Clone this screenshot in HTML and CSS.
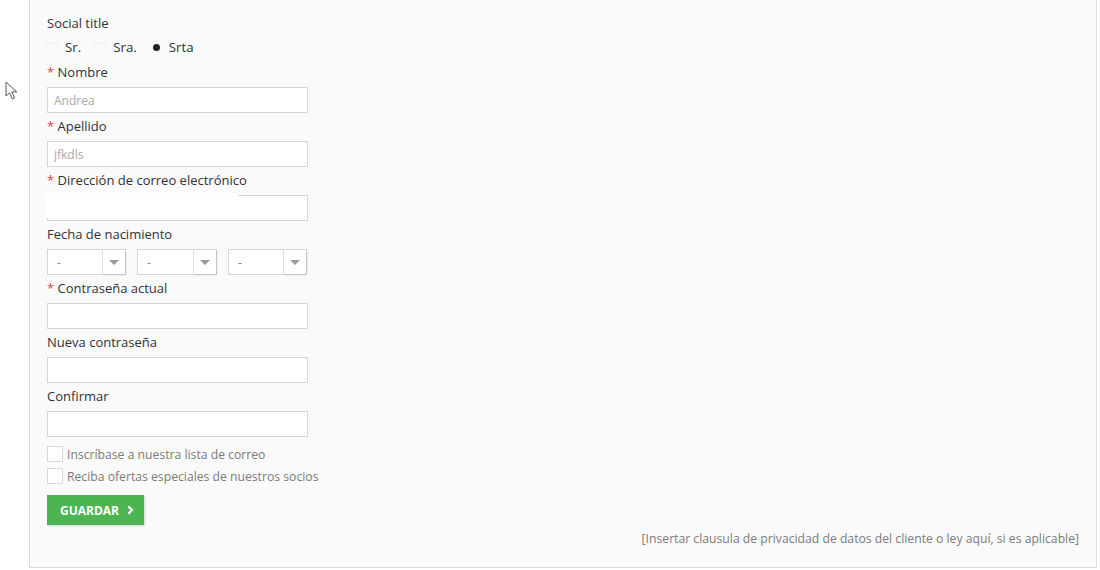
FILE: index.html
```html
<!DOCTYPE html>
<html lang="es">
<head>
    <meta charset="UTF-8">
    <title>Información personal</title>
    <link rel="stylesheet" href="styles.css">
</head>
<body>
    <!-- Mouse pointer left on the screenshot -->
    <svg class="pointer" viewBox="0 0 14 20" width="14" height="20">
        <path d="M1 1 L1 15 L4.5 11.8 L7.3 18 L9.6 17 L6.9 10.9 L11.8 10.9 Z" fill="#fff" stroke="#555" stroke-width="1" stroke-linejoin="round"/>
    </svg>

    <section class="panel">
        <form class="customer-form">
            <div class="field">
                <div class="label">Social title</div>
                <div class="radios">
                    <label class="radio"><span class="dot"></span>Sr.</label>
                    <label class="radio"><span class="dot"></span>Sra.</label>
                    <label class="radio"><span class="dot checked"></span>Srta</label>
                </div>
            </div>

            <div class="field">
                <div class="label"><span class="req">*</span> Nombre</div>
                <input class="text-input" type="text" placeholder="Andrea">
            </div>

            <div class="field">
                <div class="label"><span class="req">*</span> Apellido</div>
                <input class="text-input" type="text" placeholder="jfkdls">
            </div>

            <div class="field">
                <div class="label"><span class="req">*</span> Dirección de correo electrónico</div>
                <div class="masked">
                    <input class="text-input" type="email">
                    <span class="redact"></span>
                </div>
            </div>

            <div class="field">
                <div class="label">Fecha de nacimiento</div>
                <div class="date-row">
                    <div class="select small"><span>-</span><span class="arrow"></span></div>
                    <div class="select"><span>-</span><span class="arrow"></span></div>
                    <div class="select small"><span>-</span><span class="arrow"></span></div>
                </div>
            </div>

            <div class="field">
                <div class="label"><span class="req">*</span> Contraseña actual</div>
                <input class="text-input" type="password">
            </div>

            <div class="field">
                <div class="label">Nueva contraseña</div>
                <input class="text-input" type="password">
            </div>

            <div class="field">
                <div class="label">Confirmar</div>
                <input class="text-input" type="password">
            </div>

            <div class="checks">
                <label class="check"><span class="box"></span>Inscríbase a nuestra lista de correo</label>
                <label class="check"><span class="box"></span>Reciba ofertas especiales de nuestros socios</label>
            </div>

            <button class="save-btn" type="button">GUARDAR
                <svg class="chev" viewBox="0 0 7 10" width="7" height="10"><path d="M1.3 1.2 L5 5 L1.3 8.8" fill="none" stroke="#fff" stroke-width="2.2"/></svg>
            </button>

            <p class="privacy">[Insertar clausula de privacidad de datos del cliente o ley aquí, si es aplicable]</p>
        </form>
    </section>
</body>
</html>
```

FILE: styles.css
```css
/* General */
body {
    margin: 0;
    background: #fff;
    font-family: 'Open Sans', 'Noto Sans', sans-serif;
    color: #2f3238;
    font-size: 13px;
}

.pointer {
    position: absolute;
    left: 5px;
    top: 81px;
}

.panel {
    margin: 0 3px 0 29px;
    background: #fafafa;
    border: 1px solid #dcdcdc;
    border-top: none;
    padding: 13px 17px 19px 17px;
}

.customer-form {
    display: flex;
    flex-direction: column;
}

.field {
    margin-bottom: 3px;
}

.label {
    line-height: 20px;
    height: 20px;
    margin-bottom: 5px;
}

.req {
    color: #e4403e;
}

/* Radios */
.radios {
    display: flex;
    gap: 14px;
    height: 20px;
    align-items: center;
    margin: -1px 0 2px;
}

.radio {
    display: flex;
    align-items: center;
    gap: 8px;
    font-size: 13.3px;
}

.dot {
    width: 10px;
    height: 10px;
    border-radius: 50%;
    border: 1px dotted #e4e4e4;
    box-sizing: border-box;
    position: relative;
}

.dot.checked {
    border: none;
}

.dot.checked::after {
    content: "";
    position: absolute;
    left: 2px;
    top: 2px;
    width: 7px;
    height: 7px;
    border-radius: 50%;
    background: #222;
}

/* Inputs */
.text-input {
    display: block;
    box-sizing: border-box;
    width: 261px;
    height: 26px;
    margin: 0;
    padding: 0 6px;
    border: 1px solid #d6d6d6;
    background: #fff;
    font-family: inherit;
    font-size: 12px;
    color: #555;
    outline: none;
}

.text-input::placeholder {
    color: #a9a9a9;
}

.masked {
    position: relative;
}

.redact {
    position: absolute;
    left: -2px;
    top: -2px;
    width: 193px;
    height: 25px;
    background: #fff;
}

/* Date selects */
.date-row {
    display: flex;
    gap: 11px;
}

.select {
    box-sizing: border-box;
    width: 80px;
    height: 26px;
    border: 1px solid #d6d6d6;
    background: #fff;
    display: flex;
    justify-content: space-between;
    font-size: 12px;
    color: #888;
}

.select.small {
    width: 79px;
}

.select span:first-child {
    padding: 4px 0 0 9px;
}

.arrow {
    width: 22px;
    border-left: 1px solid #e2e2e2;
    box-shadow: 1px 1px 2px rgba(0, 0, 0, 0.12);
    position: relative;
}

.arrow::after {
    content: "";
    position: absolute;
    left: 6px;
    top: 10px;
    border-left: 5px solid transparent;
    border-right: 5px solid transparent;
    border-top: 5px solid #9a9a9a;
}

/* Checkboxes */
.checks {
    margin-top: 3px;
}

.check {
    display: flex;
    align-items: center;
    height: 22px;
    gap: 4px;
    color: #7a7a7a;
    font-size: 12.2px;
}

.box {
    width: 14px;
    height: 14px;
    border: 1px solid #d8d8d8;
    background: #fff;
}

/* Button */
.save-btn {
    align-self: flex-start;
    margin-top: 8px;
    width: 97px;
    height: 30px;
    border: none;
    background: #4cb552;
    color: #fff;
    font-family: inherit;
    font-weight: 700;
    font-size: 12px;
    padding: 0 0 0 3px;
    display: flex;
    align-items: center;
    justify-content: center;
    gap: 8px;
    box-shadow: 1px 1px 2px rgba(0, 0, 0, 0.15);
}

.privacy {
    margin: 5px 0 0;
    text-align: right;
    font-size: 12.2px;
    line-height: 18px;
    color: #7a7a7a;
}
```
